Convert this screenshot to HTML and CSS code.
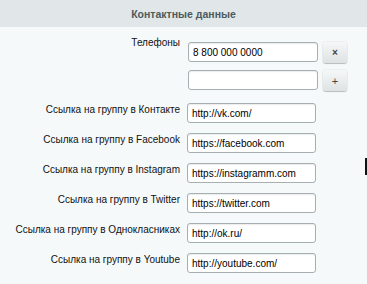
FILE: index.html
```html
<!DOCTYPE html>
<html lang="ru">

<head>
    <meta charset="UTF-8">
    <meta name="viewport" content="width=device-width, initial-scale=1.0">
    <title>Контактные данные</title>
    <link rel="stylesheet" href="styles.css">
</head>

<body>
    <div class="header">Контактные данные</div>
    <form class="contacts">
        <div class="row phones">
            <label class="label">Телефоны</label>
            <div class="phone-list">
                <div class="phone-line">
                    <input type="text" class="field" value="8 800 000 0000">
                    <button type="button" class="btn btn-remove">&times;</button>
                </div>
                <div class="phone-line">
                    <input type="text" class="field" value="">
                    <button type="button" class="btn btn-add">+</button>
                </div>
            </div>
        </div>
        <div class="row">
            <label class="label">Ссылка на группу в Контакте</label>
            <input type="text" class="field" value="http://vk.com/">
        </div>
        <div class="row">
            <label class="label">Ссылка на группу в Facebook</label>
            <input type="text" class="field" value="https://facebook.com">
        </div>
        <div class="row">
            <label class="label">Ссылка на группу в Instagram</label>
            <input type="text" class="field" value="https://instagramm.com">
        </div>
        <div class="row">
            <label class="label">Ссылка на группу в Twitter</label>
            <input type="text" class="field" value="https://twitter.com">
        </div>
        <div class="row">
            <label class="label">Ссылка на группу в Однокласниках</label>
            <input type="text" class="field" value="http://ok.ru/">
        </div>
        <div class="row">
            <label class="label">Ссылка на группу в Youtube</label>
            <input type="text" class="field" value="http://youtube.com/">
        </div>
    </form>
    <div class="caret"></div>
</body>

</html>
```

FILE: styles.css
```css
body {
    margin: 0;
    padding: 0;
    background-color: #f5f9fa;
    font-family: 'Liberation Sans', Arial, sans-serif;
    overflow: hidden;
}

.header {
    height: 27px;
    line-height: 28px;
    background-color: #e1e7e8;
    color: #4d5a5d;
    font-size: 10.5px;
    font-weight: bold;
    text-align: center;
}

.contacts {
    padding-top: 9px;
}

.row {
    display: flex;
    align-items: flex-start;
    margin-bottom: 10px;
}

.row.phones {
    margin-bottom: 12px;
}

.label {
    width: 180px;
    flex-shrink: 0;
    padding-top: 1px;
    text-align: right;
    white-space: nowrap;
    font-size: 10px;
    line-height: 12px;
    color: #111;
}

.field {
    margin: 0 0 0 7px;
    width: 129px;
    height: 20px;
    padding: 0 4px;
    box-sizing: border-box;
    border: 1px solid #a6afb2;
    border-radius: 3px;
    background-color: #fff;
    box-shadow: inset 0 1px 1px rgba(0, 0, 0, 0.08);
    font-family: 'Liberation Sans', Arial, sans-serif;
    font-size: 10px;
    color: #000;
}

.phone-list {
    padding-top: 6px;
    display: flex;
    flex-direction: column;
    gap: 7px;
}

.phone-line {
    display: flex;
    align-items: flex-start;
}

.phone-line .field {
    margin-left: 8px;
    width: 130px;
}

.btn {
    margin-left: 5px;
    width: 24px;
    height: 21px;
    padding: 0;
    border: none;
    border-radius: 3px;
    background: linear-gradient(#f6f8f8, #dde2e3);
    box-shadow: 0 1px 1px rgba(0, 0, 0, 0.22), 0 0 0 1px rgba(0, 0, 0, 0.04);
    color: #444;
    font-family: 'Liberation Sans', Arial, sans-serif;
}

.btn-remove {
    font-size: 10px;
    font-weight: bold;
}

.btn-add {
    font-size: 11px;
}

.caret {
    position: absolute;
    left: 365px;
    top: 158px;
    width: 2px;
    height: 17px;
    background-color: #111;
}
```
